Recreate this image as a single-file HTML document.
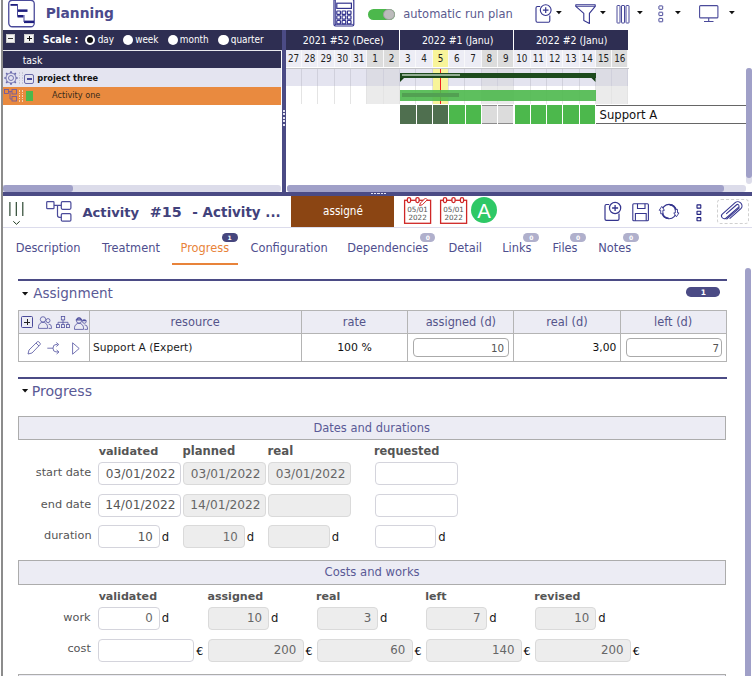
<!DOCTYPE html>
<html><head><meta charset="utf-8"><title>Planning</title>
<style>
*{box-sizing:border-box;margin:0;padding:0}
html,body{width:752px;height:676px;overflow:hidden;background:#fff;font-family:"DejaVu Sans","Liberation Sans",sans-serif;font-size:11px;color:#000}
#root{position:relative;width:752px;height:676px;overflow:hidden}
.a{position:absolute}
.t{position:absolute;white-space:nowrap;line-height:1}
svg{position:absolute;overflow:visible}
.inp{position:absolute;border:1px solid #d4d4dc;border-radius:4px;background:#fff}
.ro{background:#ededed;border-color:#dadada}
</style></head><body><div id="root">

<div class="a" style="left:1px;top:0;width:2px;height:676px;background:#8c8c8c"></div>
<div class="t" style="left:45.66px;top:7.00px;font-size:13.80px;font-weight:bold;color:#4b4a8c;">Planning</div>
<div class="t" style="left:403.31px;top:9.00px;font-size:11.49px;color:#5b5a8e;">automatic run plan</div>
<svg style="left:8px;top:0" width="27" height="28" viewBox="0 0 27 28"><rect x="0.75" y="0.25" width="25.5" height="26.5" rx="3.5" fill="none" stroke="#4a4a9a" stroke-width="1.3"/>
<g fill="#1e1e7e"><rect x="2.5" y="4" width="7" height="1.8"/><rect x="9.5" y="9.4" width="10" height="2.5"/><rect x="9.5" y="15" width="6" height="2.5"/><rect x="16" y="20.6" width="10" height="2.5"/></g>
<g fill="#4a4a9a"><rect x="9" y="4" width="1" height="12.5"/><rect x="15.5" y="15" width="1" height="7"/></g></svg>
<svg style="left:333px;top:-1px" width="22" height="28" viewBox="0 0 22 28"><g fill="none" stroke="#34348e"><rect x="1" y="0.4" width="19.8" height="26.6" rx="1.4" stroke-width="1.2"/><path d="M2.5 1v25.4M1.6 25.4H20.2" stroke-width="0.8"/>
<rect x="3.8" y="4.2" width="14.6" height="5.2" stroke-width="1.2"/><g stroke-width="1.2">
<rect x="3.8" y="12.00" width="3.6" height="3.4" rx="0.4"/>
<rect x="9.1" y="12.00" width="3.6" height="3.4" rx="0.4"/>
<rect x="14.4" y="12.00" width="3.6" height="3.4" rx="0.4"/>
<rect x="3.8" y="16.75" width="3.6" height="3.4" rx="0.4"/>
<rect x="9.1" y="16.75" width="3.6" height="3.4" rx="0.4"/>
<rect x="14.4" y="16.75" width="3.6" height="3.4" rx="0.4"/>
<rect x="3.8" y="21.50" width="3.6" height="3.4" rx="0.4"/>
<rect x="9.1" y="21.50" width="3.6" height="3.4" rx="0.4"/>
<rect x="14.4" y="21.50" width="3.6" height="3.4" rx="0.4"/>
</g></g></svg>
<div class="a" style="left:368px;top:8.6px;width:27px;height:11.4px;border-radius:6px;background:#4cb84c"></div>
<div class="a" style="left:383.4px;top:8.6px;width:11.6px;height:11.4px;border-radius:6px;background:#bcbcbc;border:1px solid #9c9c9c"></div>
<svg style="left:556px;top:11.3px" width="5.8" height="3.2" viewBox="0 0 5.8 3.2"><path d="M0 0h5.8L2.9 3.2z" fill="#111"/></svg>
<svg style="left:599.7px;top:11.3px" width="5.8" height="3.2" viewBox="0 0 5.8 3.2"><path d="M0 0h5.8L2.9 3.2z" fill="#111"/></svg>
<svg style="left:636.9px;top:11.3px" width="5.8" height="3.2" viewBox="0 0 5.8 3.2"><path d="M0 0h5.8L2.9 3.2z" fill="#111"/></svg>
<svg style="left:674.9px;top:11.3px" width="5.8" height="3.2" viewBox="0 0 5.8 3.2"><path d="M0 0h5.8L2.9 3.2z" fill="#111"/></svg>
<svg style="left:728.7px;top:11.3px" width="5.8" height="3.2" viewBox="0 0 5.8 3.2"><path d="M0 0h5.8L2.9 3.2z" fill="#111"/></svg>
<svg style="left:535.2px;top:3.1px" width="18" height="20" viewBox="0 0 18 20"><path d="M5.2 3.5H2.4a1.4 1.4 0 0 0-1.4 1.4V17.8a1.4 1.4 0 0 0 1.4 1.4h11a1.4 1.4 0 0 0 1.4-1.4V12.4" fill="none" stroke="#34348e" stroke-width="1.1"/>
<circle cx="10.7" cy="7.1" r="5.4" fill="#fff" stroke="#34348e" stroke-width="1.1"/><path d="M10.7 4.3v5.6M7.9 7.1h5.6" stroke="#34348e" stroke-width="1.2"/></svg>
<svg style="left:575px;top:3.6px" width="22" height="20" viewBox="0 0 22 20"><g fill="none" stroke="#34348e" stroke-width="1.1" stroke-linejoin="round"><path d="M0.8 0.8H20.2V2.3L14.4 9.4V19.4L8.8 16.6V9.4L0.8 2.3z"/><path d="M0.8 2.3H20.2" stroke-width="0.9"/></g></svg>
<svg style="left:616px;top:5px" width="14" height="19" viewBox="0 0 14 19"><g fill="none" stroke="#4a4a9a" stroke-width="1"><rect x="1" y="0.5" width="3" height="17.5" rx="0.5"/><rect x="5.5" y="0.5" width="3" height="17.5" rx="0.5"/><rect x="10" y="0.5" width="3" height="17.5" rx="0.5"/></g></svg>
<svg style="left:658px;top:5px" width="6" height="18" viewBox="0 0 6 18"><g fill="none" stroke="#4a4a9a" stroke-width="1"><rect x="0.9" y="0.9" width="3.8" height="3.4" rx="0.4"/><rect x="0.9" y="7.2" width="3.8" height="3.4" rx="0.4"/><rect x="0.9" y="13.4" width="3.8" height="3.4" rx="0.4"/></g></svg>
<svg style="left:699px;top:5px" width="20" height="18" viewBox="0 0 20 18"><rect x="0.6" y="0.6" width="18.3" height="12.3" rx="1" fill="none" stroke="#4a4a9a" stroke-width="1.1"/><path d="M9.7 13v3M5 16.5h9.5" stroke="#4a4a9a" stroke-width="1.1" fill="none"/></svg>
<div class="a" style="left:3px;top:30px;width:279px;height:20px;background:#2e2e52"></div>
<div class="a" style="left:3px;top:50px;width:279px;height:1.3px;background:#e8e8ee"></div>
<div class="a" style="left:3px;top:51.3px;width:278px;height:16.5px;background:#2e2e52"></div>
<div class="a" style="left:3px;top:67.8px;width:277.8px;height:19px;background:#e4e4f0"></div>
<div class="a" style="left:3px;top:86.6px;width:277.8px;height:18px;background:#e98a3f"></div>
<div class="a" style="left:5.6px;top:34.4px;width:9.5px;height:8.2px;background:#f2f2f2;border:1px solid #ccc"></div><div class="a" style="left:7.8px;top:37.7px;width:5px;height:1.6px;background:#333"></div>
<div class="a" style="left:24.4px;top:34.4px;width:9.8px;height:8.2px;background:#f2f2f2;border:1px solid #ccc"></div><div class="a" style="left:26.8px;top:37.8px;width:5px;height:1.4px;background:#111"></div><div class="a" style="left:28.6px;top:36px;width:1.4px;height:5px;background:#111"></div>
<div class="t" style="left:42.87px;top:34.00px;font-size:10.53px;font-family:'DejaVu Sans Condensed',sans-serif;font-weight:bold;color:#fff;">Scale :</div>
<div class="a" style="left:84.8px;top:34.6px;width:10.5px;height:10.5px;border-radius:6px;background:#fff"></div>
<div class="a" style="left:87.1px;top:36.9px;width:6px;height:6px;border-radius:3px;background:#111"></div>
<div class="t" style="left:97.65px;top:35.00px;font-size:9.90px;font-family:'DejaVu Sans Condensed',sans-serif;color:#fff;">day</div>
<div class="a" style="left:122.7px;top:34.6px;width:10.5px;height:10.5px;border-radius:6px;background:#fff"></div>
<div class="t" style="left:135.15px;top:35.00px;font-size:9.90px;font-family:'DejaVu Sans Condensed',sans-serif;color:#fff;">week</div>
<div class="a" style="left:167.8px;top:34.6px;width:10.5px;height:10.5px;border-radius:6px;background:#fff"></div>
<div class="t" style="left:179.81px;top:35.00px;font-size:9.90px;font-family:'DejaVu Sans Condensed',sans-serif;color:#fff;">month</div>
<div class="a" style="left:218px;top:34.6px;width:10.5px;height:10.5px;border-radius:6px;background:#fff"></div>
<div class="t" style="left:230.75px;top:35.00px;font-size:9.90px;font-family:'DejaVu Sans Condensed',sans-serif;color:#fff;">quarter</div>
<div class="t" style="left:22.69px;top:55.00px;font-size:10.36px;font-family:'DejaVu Sans Condensed',sans-serif;color:#fff;">task</div>
<div class="t" style="left:37.31px;top:73.00px;font-size:9.16px;font-family:'DejaVu Sans Condensed',sans-serif;font-weight:bold;color:#111;">project three</div>
<div class="t" style="left:52.05px;top:91.00px;font-size:9.08px;font-family:'DejaVu Sans Condensed',sans-serif;color:#3a2a1a;">Activity one</div>
<svg style="left:4px;top:71px" width="14" height="14" viewBox="0 0 14 14"><circle cx="7" cy="7" r="2.5" fill="none" stroke="#6464a8" stroke-width="0.85"/><circle cx="7" cy="7" r="5" fill="none" stroke="#6464a8" stroke-width="0.85"/><g stroke="#6464a8" stroke-width="1.7">
<path d="M7 0.3v1.6M7 12.1v1.6M0.3 7h1.6M12.1 7h1.6M2.2 2.2l1.2 1.2M10.6 10.6l1.2 1.2M2.2 11.8l1.2-1.2M10.6 3.4l1.2-1.2"/></g></svg>
<div class="a" style="left:18.5px;top:72.0px;width:1.6px;height:1.6px;background:#c8c8d8"></div>
<div class="a" style="left:18.5px;top:74.6px;width:1.6px;height:1.6px;background:#c8c8d8"></div>
<div class="a" style="left:18.5px;top:77.2px;width:1.6px;height:1.6px;background:#c8c8d8"></div>
<div class="a" style="left:18.5px;top:79.8px;width:1.6px;height:1.6px;background:#c8c8d8"></div>
<div class="a" style="left:18.5px;top:82.4px;width:1.6px;height:1.6px;background:#c8c8d8"></div>
<div class="a" style="left:21.5px;top:72.0px;width:1.6px;height:1.6px;background:#c8c8d8"></div>
<div class="a" style="left:21.5px;top:74.6px;width:1.6px;height:1.6px;background:#c8c8d8"></div>
<div class="a" style="left:21.5px;top:77.2px;width:1.6px;height:1.6px;background:#c8c8d8"></div>
<div class="a" style="left:21.5px;top:79.8px;width:1.6px;height:1.6px;background:#c8c8d8"></div>
<div class="a" style="left:21.5px;top:82.4px;width:1.6px;height:1.6px;background:#c8c8d8"></div>
<div class="a" style="left:18.5px;top:90.0px;width:1.6px;height:1.6px;background:#f6d2b4"></div>
<div class="a" style="left:18.5px;top:92.6px;width:1.6px;height:1.6px;background:#f6d2b4"></div>
<div class="a" style="left:18.5px;top:95.2px;width:1.6px;height:1.6px;background:#f6d2b4"></div>
<div class="a" style="left:18.5px;top:97.8px;width:1.6px;height:1.6px;background:#f6d2b4"></div>
<div class="a" style="left:18.5px;top:100.4px;width:1.6px;height:1.6px;background:#f6d2b4"></div>
<div class="a" style="left:21.5px;top:90.0px;width:1.6px;height:1.6px;background:#f6d2b4"></div>
<div class="a" style="left:21.5px;top:92.6px;width:1.6px;height:1.6px;background:#f6d2b4"></div>
<div class="a" style="left:21.5px;top:95.2px;width:1.6px;height:1.6px;background:#f6d2b4"></div>
<div class="a" style="left:21.5px;top:97.8px;width:1.6px;height:1.6px;background:#f6d2b4"></div>
<div class="a" style="left:21.5px;top:100.4px;width:1.6px;height:1.6px;background:#f6d2b4"></div>
<div class="a" style="left:24px;top:74.2px;width:10px;height:9.6px;border:1px solid #6a6aa8;border-radius:2px"></div><div class="a" style="left:26.5px;top:78.4px;width:5px;height:1.2px;background:#4a4a9a"></div>
<svg style="left:4px;top:89px" width="14" height="13" viewBox="0 0 14 13"><g fill="none" stroke="#6e58a0" stroke-width="0.85"><rect x="0.5" y="0.5" width="4" height="4"/><rect x="8" y="0.5" width="4.5" height="4.5"/><rect x="8" y="7.5" width="4.5" height="4.5"/><path d="M4.5 2.5h3.5M6 2.5v7.5h2"/></g></svg>
<div class="a" style="left:26.2px;top:90.5px;width:7px;height:10.3px;background:#4cb84c"></div>
<div class="a" style="left:3px;top:185px;width:277.6px;height:6.5px;border-radius:0 3px 3px 0;background:#dcdcea"></div>
<div class="a" style="left:3px;top:185px;width:70px;height:6.5px;border-radius:3px;background:#a0a0c8"></div>
<div class="a" style="left:282px;top:30px;width:4px;height:163px;background:#4b4b85"></div>
<div class="a" style="left:283px;top:109.8px;width:1.8px;height:2.2px;background:#e4e4f2"></div>
<div class="a" style="left:283px;top:113.3px;width:1.8px;height:2.2px;background:#e4e4f2"></div>
<div class="a" style="left:283px;top:116.8px;width:1.8px;height:2.2px;background:#e4e4f2"></div>
<div class="a" style="left:283px;top:120.3px;width:1.8px;height:2.2px;background:#e4e4f2"></div>
<div class="a" style="left:283px;top:123.8px;width:1.8px;height:2.2px;background:#e4e4f2"></div>
<div class="a" style="left:3px;top:191.5px;width:749px;height:4.2px;background:#4b4b85"></div>
<div class="a" style="left:370.5px;top:192.7px;width:2.4px;height:1.6px;background:#e4e4f2"></div>
<div class="a" style="left:373.9px;top:192.7px;width:2.4px;height:1.6px;background:#e4e4f2"></div>
<div class="a" style="left:377.3px;top:192.7px;width:2.4px;height:1.6px;background:#e4e4f2"></div>
<div class="a" style="left:380.7px;top:192.7px;width:2.4px;height:1.6px;background:#e4e4f2"></div>
<div class="a" style="left:384.1px;top:192.7px;width:2.4px;height:1.6px;background:#e4e4f2"></div>
<div class="a" style="left:285.6px;top:30px;width:113.4px;height:19.5px;background:#2e2e52"></div>
<div class="t" style="left:302.83px;top:35.00px;font-size:10.45px;font-family:'DejaVu Sans Condensed',sans-serif;color:#fff;">2021 #52 (Dece)</div>
<div class="a" style="left:285.60px;top:50.3px;width:16.33px;height:17.2px;background:#ededf5;border-right:1px solid #f8f8fa"></div>
<div class="t" style="left:287.89px;top:54.00px;font-size:9.80px;font-family:'DejaVu Sans Condensed',sans-serif;color:#222;">27</div>
<div class="a" style="left:285.60px;top:69px;width:16.33px;height:17.3px;background:#e4e4f0;border-right:1px solid #d0d0dc"></div>
<div class="a" style="left:285.60px;top:86.3px;width:16.33px;height:17.5px;background:#fff;border-right:1px solid #e4e4e4"></div>
<div class="a" style="left:301.93px;top:50.3px;width:16.33px;height:17.2px;background:#ededf5;border-right:1px solid #f8f8fa"></div>
<div class="t" style="left:304.15px;top:54.00px;font-size:9.80px;font-family:'DejaVu Sans Condensed',sans-serif;color:#222;">28</div>
<div class="a" style="left:301.93px;top:69px;width:16.33px;height:17.3px;background:#e4e4f0;border-right:1px solid #d0d0dc"></div>
<div class="a" style="left:301.93px;top:86.3px;width:16.33px;height:17.5px;background:#fff;border-right:1px solid #e4e4e4"></div>
<div class="a" style="left:318.26px;top:50.3px;width:16.33px;height:17.2px;background:#ededf5;border-right:1px solid #f8f8fa"></div>
<div class="t" style="left:320.50px;top:54.00px;font-size:9.80px;font-family:'DejaVu Sans Condensed',sans-serif;color:#222;">29</div>
<div class="a" style="left:318.26px;top:69px;width:16.33px;height:17.3px;background:#e4e4f0;border-right:1px solid #d0d0dc"></div>
<div class="a" style="left:318.26px;top:86.3px;width:16.33px;height:17.5px;background:#fff;border-right:1px solid #e4e4e4"></div>
<div class="a" style="left:334.59px;top:50.3px;width:16.33px;height:17.2px;background:#ededf5;border-right:1px solid #f8f8fa"></div>
<div class="t" style="left:336.80px;top:54.00px;font-size:9.80px;font-family:'DejaVu Sans Condensed',sans-serif;color:#222;">30</div>
<div class="a" style="left:334.59px;top:69px;width:16.33px;height:17.3px;background:#e4e4f0;border-right:1px solid #d0d0dc"></div>
<div class="a" style="left:334.59px;top:86.3px;width:16.33px;height:17.5px;background:#fff;border-right:1px solid #e4e4e4"></div>
<div class="a" style="left:350.91px;top:50.3px;width:16.33px;height:17.2px;background:#ededf5;border-right:1px solid #f8f8fa"></div>
<div class="t" style="left:353.25px;top:54.00px;font-size:9.80px;font-family:'DejaVu Sans Condensed',sans-serif;color:#222;">31</div>
<div class="a" style="left:350.91px;top:69px;width:16.33px;height:17.3px;background:#e4e4f0;border-right:1px solid #d0d0dc"></div>
<div class="a" style="left:350.91px;top:86.3px;width:16.33px;height:17.5px;background:#fff;border-right:1px solid #e4e4e4"></div>
<div class="a" style="left:367.24px;top:50.3px;width:16.33px;height:17.2px;background:#dcdcdc;border-right:1px solid #f8f8fa"></div>
<div class="t" style="left:372.24px;top:54.00px;font-size:9.80px;font-family:'DejaVu Sans Condensed',sans-serif;color:#222;">1</div>
<div class="a" style="left:367.24px;top:69px;width:16.33px;height:17.3px;background:#dcdce4;border-right:1px solid #d0d0dc"></div>
<div class="a" style="left:367.24px;top:86.3px;width:16.33px;height:17.5px;background:#ebebeb;border-right:1px solid #e4e4e4"></div>
<div class="a" style="left:383.57px;top:50.3px;width:16.33px;height:17.2px;background:#dcdcdc;border-right:1px solid #f8f8fa"></div>
<div class="t" style="left:388.74px;top:54.00px;font-size:9.80px;font-family:'DejaVu Sans Condensed',sans-serif;color:#222;">2</div>
<div class="a" style="left:383.57px;top:69px;width:16.33px;height:17.3px;background:#dcdce4;border-right:1px solid #d0d0dc"></div>
<div class="a" style="left:383.57px;top:86.3px;width:16.33px;height:17.5px;background:#ebebeb;border-right:1px solid #e4e4e4"></div>
<div class="a" style="left:399.9px;top:30px;width:113.4px;height:19.5px;background:#2e2e52"></div>
<div class="t" style="left:421.89px;top:35.00px;font-size:10.45px;font-family:'DejaVu Sans Condensed',sans-serif;color:#fff;">2022 #1 (Janu)</div>
<div class="a" style="left:399.90px;top:50.3px;width:16.33px;height:17.2px;background:#ededf5;border-right:1px solid #f8f8fa"></div>
<div class="t" style="left:404.97px;top:54.00px;font-size:9.80px;font-family:'DejaVu Sans Condensed',sans-serif;color:#222;">3</div>
<div class="a" style="left:399.90px;top:69px;width:16.33px;height:17.3px;background:#e4e4f0;border-right:1px solid #d0d0dc"></div>
<div class="a" style="left:399.90px;top:86.3px;width:16.33px;height:17.5px;background:#fff;border-right:1px solid #e4e4e4"></div>
<div class="a" style="left:416.23px;top:50.3px;width:16.33px;height:17.2px;background:#ededf5;border-right:1px solid #f8f8fa"></div>
<div class="t" style="left:421.32px;top:54.00px;font-size:9.80px;font-family:'DejaVu Sans Condensed',sans-serif;color:#222;">4</div>
<div class="a" style="left:416.23px;top:69px;width:16.33px;height:17.3px;background:#e4e4f0;border-right:1px solid #d0d0dc"></div>
<div class="a" style="left:416.23px;top:86.3px;width:16.33px;height:17.5px;background:#fff;border-right:1px solid #e4e4e4"></div>
<div class="a" style="left:432.56px;top:50.3px;width:16.33px;height:17.2px;background:#f8f49a;border-right:1px solid #f8f8fa"></div>
<div class="t" style="left:437.68px;top:54.00px;font-size:9.80px;font-family:'DejaVu Sans Condensed',sans-serif;color:#222;">5</div>
<div class="a" style="left:432.56px;top:69px;width:16.33px;height:17.3px;background:#f8f49a;border-right:1px solid #d0d0dc"></div>
<div class="a" style="left:432.56px;top:86.3px;width:16.33px;height:17.5px;background:#f8f49a;border-right:1px solid #e4e4e4"></div>
<div class="a" style="left:448.89px;top:50.3px;width:16.33px;height:17.2px;background:#ededf5;border-right:1px solid #f8f8fa"></div>
<div class="t" style="left:453.91px;top:54.00px;font-size:9.80px;font-family:'DejaVu Sans Condensed',sans-serif;color:#222;">6</div>
<div class="a" style="left:448.89px;top:69px;width:16.33px;height:17.3px;background:#e4e4f0;border-right:1px solid #d0d0dc"></div>
<div class="a" style="left:448.89px;top:86.3px;width:16.33px;height:17.5px;background:#fff;border-right:1px solid #e4e4e4"></div>
<div class="a" style="left:465.21px;top:50.3px;width:16.33px;height:17.2px;background:#ededf5;border-right:1px solid #f8f8fa"></div>
<div class="t" style="left:470.29px;top:54.00px;font-size:9.80px;font-family:'DejaVu Sans Condensed',sans-serif;color:#222;">7</div>
<div class="a" style="left:465.21px;top:69px;width:16.33px;height:17.3px;background:#e4e4f0;border-right:1px solid #d0d0dc"></div>
<div class="a" style="left:465.21px;top:86.3px;width:16.33px;height:17.5px;background:#fff;border-right:1px solid #e4e4e4"></div>
<div class="a" style="left:481.54px;top:50.3px;width:16.33px;height:17.2px;background:#dcdcdc;border-right:1px solid #f8f8fa"></div>
<div class="t" style="left:486.59px;top:54.00px;font-size:9.80px;font-family:'DejaVu Sans Condensed',sans-serif;color:#222;">8</div>
<div class="a" style="left:481.54px;top:69px;width:16.33px;height:17.3px;background:#dcdce4;border-right:1px solid #d0d0dc"></div>
<div class="a" style="left:481.54px;top:86.3px;width:16.33px;height:17.5px;background:#ebebeb;border-right:1px solid #e4e4e4"></div>
<div class="a" style="left:497.87px;top:50.3px;width:16.33px;height:17.2px;background:#dcdcdc;border-right:1px solid #f8f8fa"></div>
<div class="t" style="left:502.97px;top:54.00px;font-size:9.80px;font-family:'DejaVu Sans Condensed',sans-serif;color:#222;">9</div>
<div class="a" style="left:497.87px;top:69px;width:16.33px;height:17.3px;background:#dcdce4;border-right:1px solid #d0d0dc"></div>
<div class="a" style="left:497.87px;top:86.3px;width:16.33px;height:17.5px;background:#ebebeb;border-right:1px solid #e4e4e4"></div>
<div class="a" style="left:514.2px;top:30px;width:113.4px;height:19.5px;background:#2e2e52"></div>
<div class="t" style="left:535.89px;top:35.00px;font-size:10.45px;font-family:'DejaVu Sans Condensed',sans-serif;color:#fff;">2022 #2 (Janu)</div>
<div class="a" style="left:514.20px;top:50.3px;width:16.33px;height:17.2px;background:#ededf5;border-right:1px solid #f8f8fa"></div>
<div class="t" style="left:516.27px;top:54.00px;font-size:9.80px;font-family:'DejaVu Sans Condensed',sans-serif;color:#222;">10</div>
<div class="a" style="left:514.20px;top:69px;width:16.33px;height:17.3px;background:#e4e4f0;border-right:1px solid #d0d0dc"></div>
<div class="a" style="left:514.20px;top:86.3px;width:16.33px;height:17.5px;background:#fff;border-right:1px solid #e4e4e4"></div>
<div class="a" style="left:530.53px;top:50.3px;width:16.33px;height:17.2px;background:#ededf5;border-right:1px solid #f8f8fa"></div>
<div class="t" style="left:532.72px;top:54.00px;font-size:9.80px;font-family:'DejaVu Sans Condensed',sans-serif;color:#222;">11</div>
<div class="a" style="left:530.53px;top:69px;width:16.33px;height:17.3px;background:#e4e4f0;border-right:1px solid #d0d0dc"></div>
<div class="a" style="left:530.53px;top:86.3px;width:16.33px;height:17.5px;background:#fff;border-right:1px solid #e4e4e4"></div>
<div class="a" style="left:546.86px;top:50.3px;width:16.33px;height:17.2px;background:#ededf5;border-right:1px solid #f8f8fa"></div>
<div class="t" style="left:549.08px;top:54.00px;font-size:9.80px;font-family:'DejaVu Sans Condensed',sans-serif;color:#222;">12</div>
<div class="a" style="left:546.86px;top:69px;width:16.33px;height:17.3px;background:#e4e4f0;border-right:1px solid #d0d0dc"></div>
<div class="a" style="left:546.86px;top:86.3px;width:16.33px;height:17.5px;background:#fff;border-right:1px solid #e4e4e4"></div>
<div class="a" style="left:563.19px;top:50.3px;width:16.33px;height:17.2px;background:#ededf5;border-right:1px solid #f8f8fa"></div>
<div class="t" style="left:565.31px;top:54.00px;font-size:9.80px;font-family:'DejaVu Sans Condensed',sans-serif;color:#222;">13</div>
<div class="a" style="left:563.19px;top:69px;width:16.33px;height:17.3px;background:#e4e4f0;border-right:1px solid #d0d0dc"></div>
<div class="a" style="left:563.19px;top:86.3px;width:16.33px;height:17.5px;background:#fff;border-right:1px solid #e4e4e4"></div>
<div class="a" style="left:579.51px;top:50.3px;width:16.33px;height:17.2px;background:#ededf5;border-right:1px solid #f8f8fa"></div>
<div class="t" style="left:581.54px;top:54.00px;font-size:9.80px;font-family:'DejaVu Sans Condensed',sans-serif;color:#222;">14</div>
<div class="a" style="left:579.51px;top:69px;width:16.33px;height:17.3px;background:#e4e4f0;border-right:1px solid #d0d0dc"></div>
<div class="a" style="left:579.51px;top:86.3px;width:16.33px;height:17.5px;background:#fff;border-right:1px solid #e4e4e4"></div>
<div class="a" style="left:595.84px;top:50.3px;width:16.33px;height:17.2px;background:#dcdcdc;border-right:1px solid #f8f8fa"></div>
<div class="t" style="left:598.01px;top:54.00px;font-size:9.80px;font-family:'DejaVu Sans Condensed',sans-serif;color:#222;">15</div>
<div class="a" style="left:595.84px;top:69px;width:16.33px;height:17.3px;background:#dcdce4;border-right:1px solid #d0d0dc"></div>
<div class="a" style="left:595.84px;top:86.3px;width:16.33px;height:17.5px;background:#ebebeb;border-right:1px solid #e4e4e4"></div>
<div class="a" style="left:612.17px;top:50.3px;width:16.33px;height:17.2px;background:#dcdcdc;border-right:1px solid #f8f8fa"></div>
<div class="t" style="left:614.22px;top:54.00px;font-size:9.80px;font-family:'DejaVu Sans Condensed',sans-serif;color:#222;">16</div>
<div class="a" style="left:612.17px;top:69px;width:16.33px;height:17.3px;background:#dcdce4;border-right:1px solid #d0d0dc"></div>
<div class="a" style="left:612.17px;top:86.3px;width:16.33px;height:17.5px;background:#ebebeb;border-right:1px solid #e4e4e4"></div>
<div class="a" style="left:286px;top:67.5px;width:342.6px;height:1.5px;background:#c4c4c8"></div>
<div class="a" style="left:439.8px;top:69px;width:1.2px;height:35px;background:#f02020"></div>
<div class="a" style="left:400.2px;top:72.8px;width:195.5px;height:5.6px;background:#1d4a1d"></div>
<svg style="left:400.2px;top:78.2px" width="195.5" height="4" viewBox="0 0 195.5 4"><path d="M0 0h4L0 4z M191.5 0h4v4z" fill="#143c14"/></svg>
<div class="a" style="left:401.5px;top:74.4px;width:58px;height:1.4px;background:#93ad93"></div>
<div class="a" style="left:400.2px;top:89.8px;width:195.5px;height:10.8px;background:rgba(76,184,76,0.9)"></div>
<div class="a" style="left:401.5px;top:93.2px;width:57.5px;height:4px;background:#52a052"></div>
<div class="a" style="left:400.20px;top:105.3px;width:15.33px;height:18.5px;background:#4f6f4f;"></div>
<div class="a" style="left:416.53px;top:105.3px;width:15.33px;height:18.5px;background:#4f6f4f;"></div>
<div class="a" style="left:432.86px;top:105.3px;width:15.33px;height:18.5px;background:#4f6f4f;"></div>
<div class="a" style="left:449.19px;top:105.3px;width:15.33px;height:18.5px;background:#4cb84c;"></div>
<div class="a" style="left:465.51px;top:105.3px;width:15.33px;height:18.5px;background:#4cb84c;"></div>
<div class="a" style="left:481.84px;top:105.3px;width:15.33px;height:18.5px;background:#dcdcdc;border-top:1px solid #8c8c8c;border-bottom:1px solid #8c8c8c;"></div>
<div class="a" style="left:498.17px;top:105.3px;width:15.33px;height:18.5px;background:#dcdcdc;border-top:1px solid #8c8c8c;border-bottom:1px solid #8c8c8c;"></div>
<div class="a" style="left:514.50px;top:105.3px;width:15.33px;height:18.5px;background:#4cb84c;"></div>
<div class="a" style="left:530.83px;top:105.3px;width:15.33px;height:18.5px;background:#4cb84c;"></div>
<div class="a" style="left:547.16px;top:105.3px;width:15.33px;height:18.5px;background:#4cb84c;"></div>
<div class="a" style="left:563.49px;top:105.3px;width:15.33px;height:18.5px;background:#4cb84c;"></div>
<div class="a" style="left:579.81px;top:105.3px;width:15.33px;height:18.5px;background:#4cb84c;"></div>
<div class="a" style="left:595.5px;top:104.8px;width:151px;height:19.2px;background:#fff;border-top:1px solid #666;border-bottom:1px solid #666"></div>
<div class="t" style="left:599.54px;top:110.00px;font-size:11.63px;color:#111;">Support A</div>
<div class="a" style="left:746.3px;top:68px;width:6px;height:116px;border-radius:3px;background:#dcdcea"></div>
<div class="a" style="left:746.3px;top:68px;width:6px;height:110px;border-radius:3px;background:#a0a0c8"></div>
<div class="a" style="left:287px;top:185.3px;width:459px;height:6.3px;border-radius:3px;background:#dcdcea"></div>
<div class="a" style="left:287px;top:185.3px;width:436.5px;height:6.3px;border-radius:3px;background:#a0a0c8"></div>
<div class="a" style="left:3px;top:227px;width:749px;height:1.3px;background:#dcdcec"></div>
<svg style="left:8px;top:201px" width="18" height="16" viewBox="0 0 18 16"><path d="M1.9 1v14M8.3 1v14M14.8 1v14" stroke="#24402a" stroke-width="1.15" fill="none"/></svg>
<svg style="left:12.5px;top:221px" width="7" height="4" viewBox="0 0 7 4"><path d="M0.3 0.3L3.5 3.3L6.7 0.3" fill="none" stroke="#1f3a1f" stroke-width="1"/></svg>
<svg style="left:45.5px;top:201px" width="26" height="21" viewBox="0 0 26 21"><g fill="none" stroke="#4a4a9a" stroke-width="1.2"><rect x="0.7" y="0.7" width="7.3" height="7" rx="0.8"/><rect x="15.3" y="0.7" width="9.6" height="7.6" rx="1.2"/><rect x="15.3" y="12.6" width="9.6" height="7.6" rx="1.2"/><path d="M8 4.3h7.3M11.5 4.3v10a2 2 0 0 0 2 2h1.8"/></g></svg>
<div class="t" style="left:82.40px;top:206.00px;font-size:13.15px;font-weight:bold;color:#42427c;">Activity</div>
<div class="t" style="left:149.67px;top:205.00px;font-size:14.34px;font-weight:bold;color:#42427c;">#15</div>
<div class="t" style="left:192.33px;top:206.00px;font-size:13.46px;font-weight:bold;color:#42427c;">- Activity ...</div>
<div class="a" style="left:291.2px;top:195.6px;width:103.1px;height:31.3px;background:#8b4513"></div>
<div class="t" style="left:323.12px;top:206.00px;font-size:11.59px;font-family:'DejaVu Sans Condensed',sans-serif;color:#fff;">assigné</div>
<svg style="left:403.6px;top:197px" width="28" height="27" viewBox="0 0 28 27"><rect x="0.6" y="3.3" width="26" height="23" fill="#fff" stroke="#cf2626" stroke-width="1.3"/>
<rect x="3.4" y="0.6" width="3.2" height="5" rx="1.5" fill="#fff" stroke="#cf2626" stroke-width="1.3"/>
<rect x="11.9" y="0.6" width="3.2" height="5" rx="1.5" fill="#fff" stroke="#cf2626" stroke-width="1.3"/>
<path d="M15.5 8.5l1-2.5l5-5l1.8 1.8l-5 5z" fill="#fff" stroke="#d42a2a" stroke-width="1"/>
<text x="13.6" y="14.6" font-size="7.2" fill="#555" text-anchor="middle" font-family="DejaVu Sans, sans-serif">05/01</text><text x="13.6" y="23.3" font-size="7.2" fill="#555" text-anchor="middle" font-family="DejaVu Sans, sans-serif">2022</text></svg>
<svg style="left:440.2px;top:197px" width="28" height="27" viewBox="0 0 28 27"><rect x="0.6" y="3.3" width="26" height="23" fill="#fff" stroke="#cf2626" stroke-width="1.3"/>
<rect x="3.4" y="0.6" width="3.2" height="5" rx="1.5" fill="#fff" stroke="#cf2626" stroke-width="1.3"/>
<rect x="11.9" y="0.6" width="3.2" height="5" rx="1.5" fill="#fff" stroke="#cf2626" stroke-width="1.3"/>
<rect x="20.4" y="0.6" width="3.2" height="5" rx="1.5" fill="#fff" stroke="#cf2626" stroke-width="1.3"/>
<text x="13.6" y="14.6" font-size="7.2" fill="#555" text-anchor="middle" font-family="DejaVu Sans, sans-serif">05/01</text><text x="13.6" y="23.3" font-size="7.2" fill="#555" text-anchor="middle" font-family="DejaVu Sans, sans-serif">2022</text></svg>
<div class="a" style="left:470.5px;top:196.7px;width:26px;height:26px;border-radius:13px;background:#2ec866"></div>
<div class="t" style="left:477.20px;top:201.00px;font-size:20.30px;font-family:'Liberation Sans',sans-serif;color:#fff;">A</div>
<svg style="left:604px;top:201px" width="18" height="20" viewBox="0 0 18 20"><path d="M5.2 3.5H2.4a1.4 1.4 0 0 0-1.4 1.4V18a1.4 1.4 0 0 0 1.4 1.4h11.2a1.4 1.4 0 0 0 1.4-1.4V12.6" fill="none" stroke="#34348e" stroke-width="1.2"/>
<circle cx="11.1" cy="7" r="5.6" fill="#fff" stroke="#34348e" stroke-width="1.2"/><path d="M11.1 4v6M8.1 7h6" stroke="#34348e" stroke-width="1.3"/></svg>
<svg style="left:632px;top:203px" width="18" height="19" viewBox="0 0 18 19"><g fill="none" stroke="#34348e" stroke-width="1.1"><rect x="0.8" y="0.8" width="15.6" height="17" rx="1"/><path d="M5.5 0.8v4.7h7.5V0.8M3.4 17.8v-7.3h10.8v7.3"/></g></svg>
<svg style="left:659px;top:203px" width="21" height="18" viewBox="0 0 21 18"><g fill="none" stroke="#34348e" stroke-width="1.1"><circle cx="10.1" cy="8.6" r="7.2"/><path d="M10.6 1.9a6.6 6.6 0 0 1 6.2 5.4M9.6 15.3a6.6 6.6 0 0 1-6.2-5.4" stroke-width="1.7"/><path d="M2.8 3.4L0.2 7.3h1.5v3.5h2.2v-3.5h1.5z" fill="#fff" stroke-width="0.9"/><path d="M17.4 13.8l-2.6-3.9h1.5v-3.5h2.2v3.5h1.5z" fill="#fff" stroke-width="0.9"/></g></svg>
<svg style="left:695.5px;top:203.5px" width="6" height="18" viewBox="0 0 6 18"><g fill="none" stroke="#1e1e7e" stroke-width="1.1"><rect x="1" y="0.9" width="3.8" height="3.2" rx="0.3"/><rect x="1" y="7.2" width="3.8" height="3.2" rx="0.3"/><rect x="1" y="13.6" width="3.8" height="3.2" rx="0.3"/></g></svg>
<div class="a" style="left:716.8px;top:199px;width:32.5px;height:24.6px;border:1px dashed #d0d0d0;border-radius:4px"></div>
<svg style="left:719px;top:199px" width="28" height="25" viewBox="0 0 28 25"><g transform="translate(12.4 12.4) rotate(-41.5) scale(1.04 1.18)" fill="none" stroke="#34348e" stroke-width="0.9" stroke-linecap="round"><path d="M-5,-1.3H8a1.3 1.3 0 0 1 0,2.6H-8.3a2.35 2.35 0 0 1 0,-4.7H8.6a3.5 3.5 0 0 1 0,7H-5.5"/><path d="M-8.3,2.2H8"/></g></svg>
<div class="t" style="left:15.67px;top:243.00px;font-size:11.40px;color:#4e4e8e;">Description</div>
<div class="t" style="left:101.90px;top:243.00px;font-size:11.40px;color:#4e4e8e;">Treatment</div>
<div class="t" style="left:180.50px;top:243.00px;font-size:11.40px;color:#e8833a;">Progress</div>
<div class="t" style="left:250.46px;top:243.00px;font-size:11.40px;color:#4e4e8e;">Configuration</div>
<div class="t" style="left:347.21px;top:243.00px;font-size:11.40px;color:#4e4e8e;">Dependencies</div>
<div class="t" style="left:448.45px;top:243.00px;font-size:11.40px;color:#4e4e8e;">Detail</div>
<div class="t" style="left:502.28px;top:243.00px;font-size:11.40px;color:#4e4e8e;">Links</div>
<div class="t" style="left:552.56px;top:243.00px;font-size:11.40px;color:#4e4e8e;">Files</div>
<div class="t" style="left:598.31px;top:243.00px;font-size:11.40px;color:#4e4e8e;">Notes</div>
<div class="a" style="left:172px;top:262.8px;width:66px;height:1.8px;background:#e8833a"></div>
<div class="a" style="left:222px;top:233.3px;width:15.6px;height:8.8px;border-radius:4.4px;background:#46467e"></div>
<div class="t" style="left:227.54px;top:235.00px;font-size:6.00px;font-weight:bold;color:#fff;">1</div>
<div class="a" style="left:419.9px;top:233.3px;width:15.6px;height:8.8px;border-radius:4.4px;background:#b0b0cc"></div>
<div class="t" style="left:425.83px;top:235.00px;font-size:6.00px;font-weight:bold;color:#fff;">0</div>
<div class="a" style="left:523.4px;top:233.3px;width:15.6px;height:8.8px;border-radius:4.4px;background:#b0b0cc"></div>
<div class="t" style="left:529.33px;top:235.00px;font-size:6.00px;font-weight:bold;color:#fff;">0</div>
<div class="a" style="left:570px;top:233.3px;width:15.6px;height:8.8px;border-radius:4.4px;background:#b0b0cc"></div>
<div class="t" style="left:575.93px;top:235.00px;font-size:6.00px;font-weight:bold;color:#fff;">0</div>
<div class="a" style="left:623px;top:233.3px;width:15.6px;height:8.8px;border-radius:4.4px;background:#b0b0cc"></div>
<div class="t" style="left:628.93px;top:235.00px;font-size:6.00px;font-weight:bold;color:#fff;">0</div>
<div class="a" style="left:744.5px;top:267.5px;width:6.5px;height:420px;border-radius:3px;background:#a0a0c8"></div>
<div class="a" style="left:18px;top:279.2px;width:709px;height:1.8px;background:#4b4b85"></div>
<svg style="left:22px;top:291.8px" width="6.2" height="3.4" viewBox="0 0 6.2 3.4"><path d="M0 0h6.2L3.1 3.4z" fill="#111"/></svg>
<div class="t" style="left:33.13px;top:287.00px;font-size:13.55px;color:#5a5a96;">Assignment</div>
<div class="a" style="left:685.7px;top:287.2px;width:34.7px;height:9.6px;border-radius:4.8px;background:#4b4b85"></div>
<div class="t" style="left:700.67px;top:289.00px;font-size:7.50px;font-weight:bold;color:#fff;">1</div>
<div class="a" style="left:18px;top:310.3px;width:709px;height:23.5px;background:#ececf4"></div>
<div class="a" style="left:18px;top:310.3px;width:709px;height:52px;border:1px solid #b4b4b4"></div>
<div class="a" style="left:18px;top:333.2px;width:709px;height:1px;background:#b4b4b4"></div>
<div class="a" style="left:89px;top:310.3px;width:1px;height:52px;background:#b4b4b4"></div>
<div class="a" style="left:301px;top:310.3px;width:1px;height:52px;background:#b4b4b4"></div>
<div class="a" style="left:407.3px;top:310.3px;width:1px;height:52px;background:#b4b4b4"></div>
<div class="a" style="left:513.3px;top:310.3px;width:1px;height:52px;background:#b4b4b4"></div>
<div class="a" style="left:620.2px;top:310.3px;width:1px;height:52px;background:#b4b4b4"></div>
<div class="t" style="left:170.57px;top:317.00px;font-size:11.40px;color:#54548a;">resource</div>
<div class="t" style="left:342.85px;top:317.00px;font-size:11.40px;color:#54548a;">rate</div>
<div class="t" style="left:425.64px;top:317.00px;font-size:11.40px;color:#54548a;">assigned (d)</div>
<div class="t" style="left:546.29px;top:317.00px;font-size:11.40px;color:#54548a;">real (d)</div>
<div class="t" style="left:654.11px;top:317.00px;font-size:11.40px;color:#54548a;">left (d)</div>
<div class="t" style="left:93.11px;top:343.00px;font-size:10.65px;color:#1c1c1c;">Support A (Expert)</div>
<div class="t" style="left:337.15px;top:343.00px;font-size:10.91px;color:#111;">100 %</div>
<div class="t" style="left:592.50px;top:343.00px;font-size:10.69px;color:#111;">3,00</div>
<div class="inp" style="left:413.2px;top:337.7px;width:95.7px;height:19.3px;border-color:#aaa"></div>
<div class="inp" style="left:626px;top:337.7px;width:95.8px;height:19.3px;border-color:#aaa"></div>
<div class="t" style="left:490.98px;top:343.00px;font-size:10.30px;color:#555;">10</div>
<div class="t" style="left:712.38px;top:343.00px;font-size:10.30px;color:#555;">7</div>
<div class="a" style="left:21.3px;top:316.3px;width:12px;height:12px;border:1px solid #4a4a9a;border-radius:1.5px"></div><div class="a" style="left:24.3px;top:321.6px;width:6px;height:1.4px;background:#222"></div><div class="a" style="left:26.6px;top:319.3px;width:1.4px;height:6px;background:#222"></div>
<svg style="left:38px;top:316px" width="14" height="13" viewBox="0 0 14 13"><g fill="none" stroke="#5252a0" stroke-width="0.8"><circle cx="5" cy="3.4" r="2.7"/><path d="M0.5 12.4v-1.6a4.5 4.5 0 0 1 9 0v1.6z"/><circle cx="10" cy="4.6" r="2"/><path d="M10.5 8a3.2 3.2 0 0 1 3 3.2v1.2h-3"/></g></svg>
<svg style="left:55.5px;top:316px" width="14" height="13" viewBox="0 0 14 13"><g fill="none" stroke="#5252a0" stroke-width="0.8"><rect x="5.3" y="0.5" width="3.4" height="3.4"/><rect x="0.5" y="8.6" width="3" height="3"/><rect x="5.5" y="8.6" width="3" height="3"/><rect x="10.5" y="8.6" width="3" height="3"/><path d="M7 4v4.6M2 8.6V6.3h10v2.3"/></g></svg>
<svg style="left:74px;top:315.5px" width="14" height="14" viewBox="0 0 14 14"><g fill="none" stroke="#5252a0" stroke-width="0.8"><circle cx="5" cy="4.6" r="2.6"/><path d="M1.8 3.8h6.4M2.8 3.6a2.3 2.3 0 0 1 4.4 0" stroke-width="1.3"/><path d="M0.5 13.4v-1.6a4.5 4.5 0 0 1 9 0v1.6z"/><circle cx="10.3" cy="5.4" r="1.9"/><path d="M8.6 4.6h3.6" stroke-width="1.2"/><path d="M10.5 8.8a3.2 3.2 0 0 1 3 3.2v1.4h-3"/></g></svg>
<svg style="left:26.5px;top:341px" width="14" height="14" viewBox="0 0 14 14"><g fill="none" stroke="#5252a0" stroke-width="0.8" stroke-linejoin="round"><path d="M1 13l1-4L10.3 0.8a1 1 0 0 1 1.4 0l1.4 1.4a1 1 0 0 1 0 1.4L5 12z"/><path d="M9 2l3 3"/></g></svg>
<svg style="left:47px;top:341.5px" width="15" height="13" viewBox="0 0 15 13"><g fill="none" stroke="#5252a0" stroke-width="0.8"><path d="M0.3 6.2H6"/><path d="M10.5 2.5H9a3 3.7 0 0 0 0 7.4h2"/><path d="M9.3 0.5l2.4 2l-2.4 2M9.6 8l2.4 2l-2.4 2"/></g></svg>
<svg style="left:72px;top:341.5px" width="8" height="13" viewBox="0 0 8 13"><path d="M0.6 0.8v11.4l6.6-5.7z" fill="none" stroke="#5252a0" stroke-width="0.8" stroke-linejoin="round"/></svg>
<div class="a" style="left:18px;top:376.8px;width:709px;height:1.8px;background:#4b4b85"></div>
<svg style="left:22px;top:389.40000000000003px" width="6.2" height="3.4" viewBox="0 0 6.2 3.4"><path d="M0 0h6.2L3.1 3.4z" fill="#111"/></svg>
<div class="t" style="left:31.66px;top:384.00px;font-size:14.15px;color:#5a5a96;">Progress</div>
<div class="a" style="left:18px;top:415.5px;width:708px;height:24.6px;background:#ececf4;border:1px solid #acacac"></div>
<div class="t" style="left:313.41px;top:423.00px;font-size:11.48px;color:#5a5a96;">Dates and durations</div>
<div class="a" style="left:18px;top:560.2px;width:708px;height:24.6px;background:#ececf4;border:1px solid #acacac"></div>
<div class="t" style="left:324.56px;top:567.00px;font-size:11.60px;color:#5a5a96;">Costs and works</div>
<div class="a" style="left:18px;top:673.7px;width:708px;height:24px;background:#ececf4;border:1px solid #acacac"></div>
<div class="t" style="left:98.63px;top:446.00px;font-size:11.30px;font-weight:bold;color:#555;">validated</div>
<div class="t" style="left:182.57px;top:446.00px;font-size:11.57px;font-weight:bold;color:#555;">planned</div>
<div class="t" style="left:267.46px;top:446.00px;font-size:11.75px;font-weight:bold;color:#555;">real</div>
<div class="t" style="left:373.99px;top:446.00px;font-size:11.39px;font-weight:bold;color:#555;">requested</div>
<div class="t" style="left:98.63px;top:591.00px;font-size:11.09px;font-weight:bold;color:#555;">validated</div>
<div class="t" style="left:207.46px;top:591.00px;font-size:11.09px;font-weight:bold;color:#555;">assigned</div>
<div class="t" style="left:316.11px;top:591.00px;font-size:11.09px;font-weight:bold;color:#555;">real</div>
<div class="t" style="left:425.21px;top:591.00px;font-size:11.09px;font-weight:bold;color:#555;">left</div>
<div class="t" style="left:534.31px;top:591.00px;font-size:11.09px;font-weight:bold;color:#555;">revised</div>
<div class="t" style="left:35.78px;top:467.00px;font-size:11.30px;color:#555;">start date</div>
<div class="t" style="left:40.81px;top:499.00px;font-size:11.30px;color:#555;">end date</div>
<div class="t" style="left:44.00px;top:530.00px;font-size:11.30px;color:#555;">duration</div>
<div class="t" style="left:63.24px;top:612.00px;font-size:11.30px;color:#555;">work</div>
<div class="t" style="left:67.41px;top:643.00px;font-size:11.30px;color:#555;">cost</div>
<div class="inp" style="left:98.3px;top:462.2px;width:83.2px;height:22.6px"></div>
<div class="t" style="left:105.81px;top:468.00px;font-size:12.10px;color:#555;">03/01/2022</div>
<div class="inp ro" style="left:183.3px;top:462.2px;width:83.2px;height:22.6px"></div>
<div class="t" style="left:190.81px;top:468.00px;font-size:12.10px;color:#666;">03/01/2022</div>
<div class="inp ro" style="left:268.2px;top:462.2px;width:83.2px;height:22.6px"></div>
<div class="t" style="left:275.71px;top:468.00px;font-size:12.10px;color:#666;">03/01/2022</div>
<div class="inp" style="left:374.7px;top:462.2px;width:83.2px;height:22.6px"></div>
<div class="inp" style="left:98.3px;top:494px;width:83.2px;height:22.6px"></div>
<div class="t" style="left:105.32px;top:499.00px;font-size:12.19px;color:#555;">14/01/2022</div>
<div class="inp ro" style="left:183.3px;top:494px;width:83.2px;height:22.6px"></div>
<div class="t" style="left:190.32px;top:499.00px;font-size:12.19px;color:#666;">14/01/2022</div>
<div class="inp ro" style="left:268.2px;top:494px;width:83.2px;height:22.6px"></div>
<div class="inp" style="left:374.7px;top:494px;width:83.2px;height:22.6px"></div>
<div class="inp" style="left:98.3px;top:525.4px;width:61.6px;height:22.900000000000002px"></div>
<div class="t" style="left:137.87px;top:532.00px;font-size:11.80px;color:#555;">10</div>
<div class="t" style="left:161.76px;top:532.00px;font-size:11.60px;color:#1a1a1a;">d</div>
<div class="inp ro" style="left:183.3px;top:525.4px;width:61.6px;height:22.900000000000002px"></div>
<div class="t" style="left:222.87px;top:532.00px;font-size:11.80px;color:#6a6a6a;">10</div>
<div class="t" style="left:246.76px;top:532.00px;font-size:11.60px;color:#1a1a1a;">d</div>
<div class="inp ro" style="left:268.2px;top:525.4px;width:61.6px;height:22.900000000000002px"></div>
<div class="t" style="left:331.66px;top:532.00px;font-size:11.60px;color:#1a1a1a;">d</div>
<div class="inp" style="left:374.7px;top:525.4px;width:61.6px;height:22.900000000000002px"></div>
<div class="t" style="left:438.16px;top:532.00px;font-size:11.60px;color:#1a1a1a;">d</div>
<div class="inp" style="left:98.3px;top:607px;width:61.6px;height:22.6px"></div>
<div class="t" style="left:145.37px;top:613.00px;font-size:11.80px;color:#666;">0</div>
<div class="t" style="left:161.76px;top:613.00px;font-size:11.60px;color:#1a1a1a;">d</div>
<div class="inp" style="left:98.3px;top:638.7px;width:96px;height:23px"></div>
<div class="t" style="left:196.20px;top:646.00px;font-size:11.00px;color:#000;">€</div>
<div class="inp ro" style="left:207.5px;top:607px;width:61.6px;height:22.6px"></div>
<div class="t" style="left:247.07px;top:613.00px;font-size:11.80px;color:#666;">10</div>
<div class="t" style="left:270.96px;top:613.00px;font-size:11.60px;color:#1a1a1a;">d</div>
<div class="inp ro" style="left:207.5px;top:638.7px;width:96px;height:23px"></div>
<div class="t" style="left:273.76px;top:645.00px;font-size:11.80px;color:#666;">200</div>
<div class="t" style="left:305.40px;top:646.00px;font-size:11.00px;color:#000;">€</div>
<div class="inp ro" style="left:316.6px;top:607px;width:61.6px;height:22.6px"></div>
<div class="t" style="left:363.79px;top:613.00px;font-size:11.80px;color:#666;">3</div>
<div class="t" style="left:380.06px;top:613.00px;font-size:11.60px;color:#1a1a1a;">d</div>
<div class="inp ro" style="left:316.6px;top:638.7px;width:96px;height:23px"></div>
<div class="t" style="left:390.37px;top:645.00px;font-size:11.80px;color:#666;">60</div>
<div class="t" style="left:414.50px;top:646.00px;font-size:11.00px;color:#000;">€</div>
<div class="inp ro" style="left:425.7px;top:607px;width:61.6px;height:22.6px"></div>
<div class="t" style="left:472.95px;top:613.00px;font-size:11.80px;color:#666;">7</div>
<div class="t" style="left:489.16px;top:613.00px;font-size:11.60px;color:#1a1a1a;">d</div>
<div class="inp ro" style="left:425.7px;top:638.7px;width:96px;height:23px"></div>
<div class="t" style="left:491.96px;top:645.00px;font-size:11.80px;color:#666;">140</div>
<div class="t" style="left:523.60px;top:646.00px;font-size:11.00px;color:#000;">€</div>
<div class="inp ro" style="left:534.8px;top:607px;width:61.6px;height:22.6px"></div>
<div class="t" style="left:574.37px;top:613.00px;font-size:11.80px;color:#666;">10</div>
<div class="t" style="left:598.26px;top:613.00px;font-size:11.60px;color:#1a1a1a;">d</div>
<div class="inp ro" style="left:534.8px;top:638.7px;width:96px;height:23px"></div>
<div class="t" style="left:601.06px;top:645.00px;font-size:11.80px;color:#666;">200</div>
<div class="t" style="left:632.70px;top:646.00px;font-size:11.00px;color:#000;">€</div>
</div></body></html>
